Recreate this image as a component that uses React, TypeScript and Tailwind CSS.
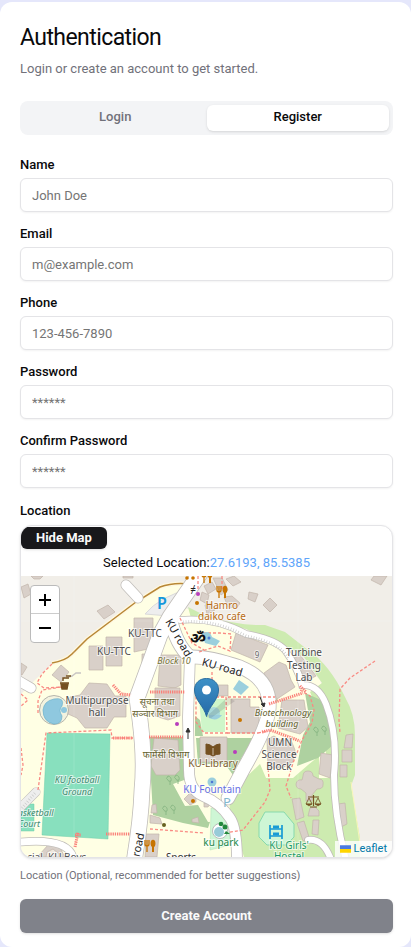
import { useState } from "react";

type Label = { x: number; y: number; t: string; c?: string; s?: number; i?: boolean; r?: number };

const buildings = [
  "108,605 115,612 104,619 97,611",
  "21,587 28,584 31,594 24,598",
  "31,576 43,576 40,579 34,579",
  "123,576 133,576 133,578 123,578",
  "21,663 27,667 22,675 21,675",
  "61,665 69,672 61,682 52,675",
  "89,646 103,646 103,670 89,670",
  "106,637 122,637 122,666 106,666",
  "134,618 153,618 153,648 134,652",
  "142,654 147,654 145,668 142,668",
  "70,697 80,695 89,683 107,684 115,696 126,696 126,717 114,717 107,728 85,728 77,718 68,714",
  "160,655 181,655 181,685 175,688 158,686",
  "155,688 180,688 180,716 168,720 155,716",
  "154,738 178,740 180,770 175,775 156,775 151,766",
  "236,633 268,645 260,662 231,650",
  "218,685 228,685 228,696 218,696",
  "231,699 250,699 250,707 259,707 259,733 231,733",
  "200,737 227,737 227,762 200,762",
  "249,592 258,594 255,602 248,599",
  "270,598 277,605 270,612 263,605",
  "374,576 387,576 381,585 371,580",
  "204,586 212,582 216,589 208,594",
  "213,578 222,578 228,590 221,595",
  "226,579 234,576 241,582 233,586",
  "202,592 209,595 207,604 200,600",
  "224,597 232,596 240,603 237,608 228,607",
  "205,605 211,603 215,610 207,614",
  "264,673 279,662 286,665 291,680 295,687 277,699 267,680",
  "294,658 300,655 316,676 306,681",
  "282,700 304,700 308,727 300,734 278,728",
  "267,739 274,736 280,740 291,740 295,750 293,762 282,768 268,768",
  "321,753 333,755 330,778 319,774",
  "346,735 353,734 352,748 344,748",
  "342,750 352,750 352,762 342,762",
  "340,765 347,765 347,777 340,777",
  "292,799 300,798 304,817 296,820",
  "297,823 304,821 309,837 303,841",
  "313,820 319,820 318,835 312,834",
  "310,808 315,807 319,811 319,816 308,816",
  "338,804 345,803 347,824 339,828",
  "184,799 190,793 196,796 196,802 190,805",
  "152,805 156,804 157,813 151,813",
  "150,815 160,818 162,824 150,823",
  "146,834 159,834 157,857 145,857",
  "192,819 198,817 199,823 192,822",
  "204,803 210,804 208,807 204,807",
  "39,855 48,845 59,846 65,857 38,857",
];

const footways = [
  "M52 664L42 674L37 683L44 688L61 687L42 690L38 701L38 715",
  "M38 790L46 733L111 730L112 738L133 738",
  "M21 694L28 700L21 706M21 748L23 765L21 775",
  "M180 618L192 643L204 650",
  "M203 633L220 633L231 634L230 651L218 646L199 652",
  "M212 672L212 682M196 697L226 697L227 733L204 733L196 722V697",
  "M228 697H275M227 733H258M258 733L268 731",
  "M150 829L204 833M225 833L243 830L265 802L270 790L268 767",
  "M300 690L310 696L314 710L312 723L302 740L293 763L286 786L291 798",
  "M375 661L350 678L340 689L339 720L340 733",
  "M198 576V590M222 576V590",
];

const steps = [
  "M150 692H185", "M149 737H183", "M113 685L121 694L131 695", "M269 704L303 693",
  "M300 686L306 692", "M113 738H133", "M106 834H130", "M75 847L78 832M75 835H81",
  "M262 732L270 730L300 741",
];

const roads: [string, number][] = [
  ["M201 572L170 617L160 635L148 668L137 698L140 720Q145 760 142 790Q141 820 134 862", 15],
  ["M170 617Q176 645 190 657Q207 656 240 667Q272 680 269 710Q267 728 244 768L228 798", 13],
  ["M190 655L188 717L189 770Q189 790 203 796Q220 803 230 818Q237 828 237 862", 10],
  ["M180 620Q215 617 246 634Q275 639 285 650Q298 668 302 685Q318 684 326 704Q338 735 334 775Q334 815 346 860", 6],
  ["M308 840Q322 838 330 857", 6],
  ["M21 842Q67 838 73 857", 7],
];

const labels: Label[] = [
  { x: 222, y: 609, t: "Hamro", c: "#b86c14" },
  { x: 222, y: 620, t: "daiko cafe", c: "#b86c14" },
  { x: 145, y: 637, t: "KU-TTC" },
  { x: 114, y: 655, t: "KU-TTC" },
  { x: 97, y: 704, t: "Multipurpose" },
  { x: 97, y: 716, t: "hall" },
  { x: 174, y: 664, t: "Block 10", c: "#777338", s: 9, i: true },
  { x: 157, y: 705, t: "सूचना तथा", c: "#65622f", s: 9 },
  { x: 155, y: 717, t: "सञ्चार विभाग", c: "#65622f", s: 9 },
  { x: 166, y: 758, t: "फार्मेसी विभाग", c: "#65622f", s: 9 },
  { x: 304, y: 656, t: "Turbine" },
  { x: 304, y: 669, t: "Testing" },
  { x: 304, y: 681, t: "Lab" },
  { x: 283, y: 716, t: "Biotechnology", c: "#625f2d", s: 9, i: true },
  { x: 282, y: 727, t: "building", c: "#625f2d", s: 9, i: true },
  { x: 280, y: 746, t: "UMN" },
  { x: 279, y: 758, t: "Science" },
  { x: 279, y: 770, t: "Block" },
  { x: 213, y: 767, t: "KU-Library", c: "#80602e" },
  { x: 212, y: 793, t: "KU Fountain", c: "#6570e4" },
  { x: 221, y: 846, t: "ku park", c: "#24884c" },
  { x: 289, y: 849, t: "KU Girls'", c: "#1f9c68" },
  { x: 289, y: 860, t: "Hostel", c: "#1f9c68" },
  { x: 77, y: 783, t: "KU football", c: "#3e8b70", s: 9, i: true },
  { x: 77, y: 795, t: "Ground", c: "#3e8b70", s: 9, i: true },
  { x: 33, y: 816, t: "Basketball", c: "#3e8b70", s: 9, i: true },
  { x: 29, y: 827, t: "Court", c: "#3e8b70", s: 9, i: true },
  { x: 51, y: 861, t: "Social, KU Boys", c: "#555" },
  { x: 181, y: 861, t: "Sports", c: "#333" },
  { x: 257, y: 658, t: "9", s: 8, c: "#666" },
  { x: 193, y: 593, t: "≠", s: 10, c: "#222" },
  { x: 178, y: 641, t: "KU road", r: 60, c: "#222", s: 11 },
  { x: 222, y: 671, t: "KU road", r: 16, c: "#222", s: 11 },
  { x: 139, y: 848, t: "road", r: -78, c: "#222", s: 11 },
];

function Fork({ x, y }: { x: number; y: number }) {
  return (
    <g transform={`translate(${x} ${y})`} stroke="#c77400" fill="none" strokeWidth="1.3">
      <path d="M0 0V4Q0 6 2 6Q4 6 4 4V0M2 0V12" />
      <ellipse cx="8" cy="3.5" rx="1.8" ry="3" fill="#c77400" />
      <path d="M8 5V12" strokeWidth="2" />
    </g>
  );
}

function CampusMap() {
  return (
    <svg
      role="img"
      aria-label="Campus map"
      viewBox="21 576 371 281"
      preserveAspectRatio="xMidYMid slice"
      className="block h-[281px] w-full font-['Noto_Sans','Noto_Sans_Devanagari',sans-serif]"
    >
      <path d="M21 576H392V857H21Z" fill="#f1eee8" />
      <path d="M21 694L37 678L52 664L65 660L88 640L140 600L160 588L187 584L185 608L246 630L290 650L320 680L340 740L335 857H21Z" fill="#ffffe4" />
      <path d="M188 607L206 616Q240 626 265 625L285 632L308 650Q330 665 345 697Q355 714 355 735V775L351 786L360 838V857H244L230 812L229 796L241 782L260 764L266 778H293L308 765L319 756V778H330L320 715L310 692L322 683L304 657L286 646Q265 638 246 629L191 618Z" fill="#cdebb0" />
      <path d="M351 782L362 857" fill="none" stroke="#f8f6b8" />
      <path d="M150 737H184V778L198 797L210 822L208 828L183 823L153 815L151 780ZM196 738H254L242 757L233 775L225 764H198ZM257 675L270 687L278 701L268 706ZM305 693L328 703L333 745L318 758L297 766L303 735L310 722ZM195 716L200 720L203 736H195Z" fill="#aed1a0" />
      <path d="M173 784L187 779L197 788L211 798L226 801L230 820L208 822L198 805L185 806Z" fill="#ffffe4" />
      <path d="M199 699H225V732H202Z" fill="#cef6c9" />
      <path d="M211 808L230 814V845L210 850Z" fill="#cef6d5" stroke="#afe1b5" strokeWidth=".5" />
      <path d="M145 614Q160 596 190 589L169 616Z" fill="#eee" stroke="#dadada" />
      <path d="M265 812H284L294 824V837L286 845H267L259 837V823Z" fill="#cef6d5" stroke="#87d9ad" />
      <path d="M47 733L110 734L108 839L42 835ZM21 804H34V831H21Z" fill="#88e0be" stroke="#6fceaa" strokeWidth=".5" />
      <path d="M52 663Q65 661 72 654L87 639L136 602L160 587Q173 582 190 584" fill="none" stroke="#fff8df" strokeWidth="4" />
      <path d="M52 663Q65 661 72 654L87 639L136 602L160 587Q173 582 190 584" fill="none" stroke="#b88736" strokeWidth="1.5" />
      <g fill="#d9d0c9" stroke="#c2b5aa" strokeWidth=".7">
        {buildings.map((p) => <polygon key={p} points={p} />)}
        <path d="M303 776Q303 771 308 771Q313 771 313 776L319 779Q324 779 323 785Q323 789 317 789L312 795V801H306V793L301 789Q296 789 296 784Q297 779 302 780Z" />
        <path d="M47 852L53 849L59 854V857H46Z" fill="#eee8de" />
      </g>
      <g fill="none" stroke="#c0bdb9" strokeLinecap="round">
        {roads.map(([d, w]) => <path key={d} d={d} strokeWidth={w + 1.6} />)}
        <path d="M126 585L138 598M17 680L31 688" strokeWidth="11" />
        <path d="M20 808L36 792" strokeWidth="9" />
      </g>
      <g fill="none" stroke="#fff" strokeLinecap="round">
        {roads.map(([d, w]) => <path key={d} d={d} strokeWidth={w} />)}
        <path d="M126 585L138 598M17 680L31 688" strokeWidth="9.5" />
        <path d="M20 808L36 792" strokeWidth="8" stroke="#eee" />
      </g>
      <path d="M183 622Q215 619 246 636Q278 642 289 658M22 808L36 792" fill="none" stroke="#c9c9c9" strokeWidth="3" strokeDasharray=".7 2" />
      <path d="M66 678L72 676L76 673H81" fill="none" stroke="#c8c5c2" strokeWidth="1.5" />
      <g fill="none" stroke="#f98a83" strokeWidth="1.3" strokeDasharray="3 2">
        {footways.map((d) => <path key={d} d={d} />)}
      </g>
      <g fill="none" stroke="#fa8079" strokeWidth="3" strokeDasharray="1.3 .9">
        {steps.map((d) => <path key={d} d={d} />)}
      </g>
      <circle cx="54" cy="710" r="14.5" fill="#f3f3df" stroke="#b5b5ac" />
      <path d="M54 699Q65 697 62 706Q58 710 62 716Q62 724 54 724Q43 722 43 710Q44 701 54 699Z" fill="#8fc8df" stroke="#6db1cb" strokeWidth=".7" />
      <circle cx="64" cy="710" r="3" fill="#8fc8df" />
      <g fill="#9bcfdd">
        <path d="M202 634Q209 629 212 637L220 641L216 646L205 643Z" />
        <path d="M239 680L249 687L241 695L233 689Z" />
        <circle cx="214" cy="713" r="6" opacity=".75" />
        <circle cx="212" cy="782" r="4.5" />
        <path d="M209 715L222 715Q217 722 209 718Z" />
      </g>
      <circle cx="220" cy="831" r="7.5" fill="#fff" stroke="#bbb" />
      <circle cx="219" cy="832" r="5" fill="#99cbd8" />
      <g fill="#4e77d3"><circle cx="209" cy="638" r="1.5" /><circle cx="212" cy="782" r="1.3" /></g>
      <g fill="#b83ebc"><circle cx="198" cy="594" r="2" /><circle cx="177" cy="724" r="2" /><circle cx="235" cy="752" r="2" /></g>
      <g fill="#c77400">
        <circle cx="197" cy="603" r="2" /><circle cx="187" cy="578" r="1.8" /><circle cx="193" cy="578" r="1.8" />
        <circle cx="240" cy="720" r="2" /><circle cx="193" cy="801" r="2" />
      </g>
      <circle cx="164" cy="825" r="2" fill="#676220" />
      <g fill="#23883c"><circle cx="221" cy="824" r="2.3" /><circle cx="225" cy="827" r="2.5" /><path d="M226 831L230 834H224Z" /></g>
      <g fill="none" stroke="#89b784" strokeWidth=".9">
        {[[168, 776], [164, 806], [315, 727]].map(([x, y]) => (
          <path key={x} d={`M${x} ${y}q4 1 3 5q-3 1-3-1q-3-1 0-4m2 5v4m6-10q4 1 3 5q-3 1-3-1q-3-1 0-4m2 5v4`} />
        ))}
      </g>
      <Fork x={217} y={586} />
      <Fork x={202} y={571} />
      <Fork x={145} y={840} />
      <g fill="none" stroke="#755022" strokeWidth="1.4">
        <path d="M206 744Q210 744 213 747Q216 744 220 744V754Q216 754 213 756Q210 754 206 754Z" fill="#755022" strokeWidth="1" />
        <path d="M213 748V755" stroke="#e5d8c8" strokeWidth=".8" />
        <path d="M313.500 795V806M308 797H319M310 807H317" strokeWidth="1.200" />
        <path d="M309 798L306 804H312ZM318 798L315 804H321Z" strokeWidth=".8" />
        <path d="M306 804H312L309 806ZM315 804H321L318 806Z" fill="#755022" strokeWidth=".5" />
        <path d="M61 684H68L67 689H62Z" fill="#755022" />
        <path d="M63 681V678H69M66 676H71M60 683H69" />
      </g>
      <g fill="none" stroke="#189bd5" strokeWidth="1.7">
        <path d="M270 825V839M282 825V839M270 829H282M270 836H282" />
        <path d="M273 827H279M273 834H279" strokeWidth="3" />
      </g>
      <g stroke="#333" fill="#333" strokeWidth="1">
        <path d="M188 739V730M186 732L188 728L190 732Z" />
        <path d="M260 697L263 705M261 704L265 703L264 707Z" />
      </g>
      <g textAnchor="middle">
        <text x="162" y="609" fontSize="16" fontWeight="600" fill="#1597db">P</text>
        <text x="227" y="807" fontSize="13" fill="#83b8cf">P</text>
        <text x="198" y="644" fontSize="16" fontWeight="700" fill="#111">ॐ</text>
        {labels.map((l) => (
          <text
            key={`${l.x}-${l.y}`}
            x={l.x}
            y={l.y}
            fontSize={l.s ?? 10}
            fontStyle={l.i ? "italic" : undefined}
            fill={l.c ?? "#4d4d4d"}
            stroke="#fff"
            strokeOpacity=".65"
            strokeWidth="2"
            paintOrder="stroke"
            transform={l.r ? `rotate(${l.r} ${l.x} ${l.y - 3})` : undefined}
          >
            {l.t}
          </text>
        ))}
      </g>
      <path d="M74 576V857M298 576V857M21 621H392" stroke="#fff" strokeWidth=".5" opacity=".25" />
      <defs>
        <linearGradient id="pin" x2="0" y2="1">
          <stop stopColor="#3d91c7" />
          <stop offset="1" stopColor="#2569a7" />
        </linearGradient>
      </defs>
      <path d="M206 717L228 697L235 701L211 718Z" fill="#222" opacity=".13" />
      <path d="M206.500 716.500C204 706 194.500 700 194.500 690C194.500 683 199.500 678.500 206.500 678.500S218.500 683 218.500 690C218.500 700 209 706 206.500 716.500Z" fill="url(#pin)" stroke="#2b6e9f" />
      <circle cx="206.500" cy="690" r="4.500" fill="#fff" />
    </svg>
  );
}

const fields = [
  { id: "name", label: "Name", type: "text", hint: "John Doe" },
  { id: "email", label: "Email", type: "email", hint: "m@example.com" },
  { id: "phone", label: "Phone", type: "tel", hint: "123-456-7890" },
  { id: "password", label: "Password", type: "password", hint: "******" },
  { id: "confirm", label: "Confirm Password", type: "password", hint: "******" },
];

export default function App() {
  const [mapOpen, setMapOpen] = useState(true);
  return (
    <div className="bg-[#e5e7fb] pt-[2px] font-[Roboto,sans-serif] text-[13px] text-[#09090b]">
      <main className="rounded-xl bg-white px-5 pt-[22px] pr-[18px] pb-[14px]">
        <h1 className="text-[23px] leading-[28px] font-normal tracking-tight">Authentication</h1>
        <p className="mt-[7px] leading-[20px] text-[#71717a]">Login or create an account to get started.</p>
        <div role="tablist" className="mt-[22px] grid h-[34px] grid-cols-2 rounded-lg bg-[#f3f4f6] p-1 font-medium">
          <button role="tab" aria-selected="false" className="rounded-md pb-[2px] text-[#71717a]">Login</button>
          <button role="tab" aria-selected="true" className="rounded-md bg-white pb-[2px] shadow-sm">Register</button>
        </div>
        <form className="mt-[23px]" onSubmit={(e) => e.preventDefault()}>
          <div className="flex flex-col gap-[15px]">
            {fields.map((f) => (
              <div key={f.id} className="flex flex-col gap-[7px]">
                <label htmlFor={f.id} className="leading-[13px] font-medium">{f.label}</label>
                <input
                  id={f.id}
                  type={f.type}
                  placeholder={f.hint}
                  className="h-[34px] w-full rounded-md border border-[#e4e4e7] bg-white px-[11px] shadow-xs placeholder:text-[#757575]"
                />
              </div>
            ))}
            <div className="flex flex-col">
              <span className="leading-[15px] font-medium">Location</span>
              <div className="mt-[7px] overflow-hidden rounded-xl border border-[#e4e4e7] bg-white shadow-sm">
                <button
                  type="button"
                  onClick={() => setMapOpen(!mapOpen)}
                  className="mt-px block h-[22px] rounded-md bg-[#18181b] px-[15px] font-bold text-[#fafafa] shadow-sm"
                >
                  {mapOpen ? "Hide Map" : "Show Map"}
                </button>
                <p className="py-[3px] text-center leading-[21px]">
                  Selected Location:<span className="text-[#60a5fa]">27.6193, 85.5385</span>
                </p>
                {mapOpen && (
                  <div className="relative">
                    <CampusMap />
                    <div className="absolute top-[9px] left-[9px] w-[30px] overflow-hidden rounded border border-[#bbb] bg-white">
                      <button type="button" aria-label="Zoom in" className="flex h-7 w-full items-center justify-center border-b border-[#ccc]">
                        <svg className="size-3" viewBox="0 0 12 12" stroke="#000" strokeWidth="2"><path d="M6 0V12M0 6H12" /></svg>
                      </button>
                      <button type="button" aria-label="Zoom out" className="flex h-7 w-full items-center justify-center">
                        <svg className="size-3" viewBox="0 0 12 12" stroke="#000" strokeWidth="2"><path d="M0 6H12" /></svg>
                      </button>
                    </div>
                    <a
                      href="#leaflet"
                      className="absolute right-0 bottom-0 flex h-[16px] items-center gap-[3px] bg-white/80 px-[5px] text-[11px] text-[#0078a8]"
                    >
                      <svg className="h-2 w-[11px]" viewBox="0 0 12 8"><path fill="#4c7be1" d="M0 0h12v4H0z" /><path fill="#ffd500" d="M0 4h12v4H0z" /></svg>
                      Leaflet
                    </a>
                  </div>
                )}
              </div>
              <p className="mt-[9px] text-[11px] leading-[18px] text-[#71717a]">Location (Optional, recommended for better suggestions)</p>
            </div>
          </div>
          <button type="submit" className="mt-[14px] h-[34px] w-full rounded-md bg-[#80828a] font-bold text-[#fafafa] shadow-sm">
            Create Account
          </button>
        </form>
      </main>
    </div>
  );
}
